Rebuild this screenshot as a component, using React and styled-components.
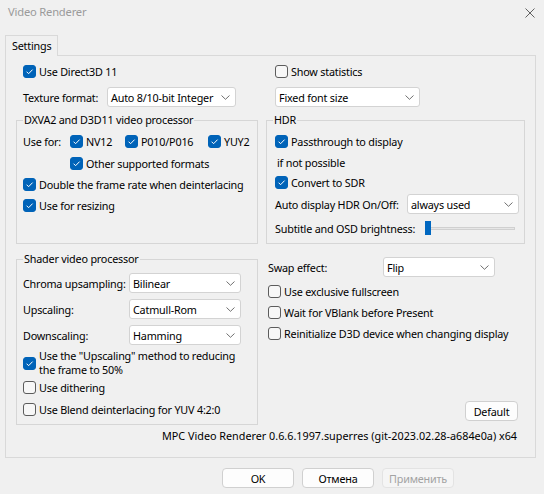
import styled, { createGlobalStyle } from "styled-components";

const GlobalStyle = createGlobalStyle`
  html, body {
    margin: 0;
    padding: 0;
    background: #f0f0f0;
  }
  body {
    font-family: "Noto Sans", "Segoe UI", sans-serif;
    font-size: 10.8px;
    letter-spacing: -0.2px;
    color: #000;
  }
  * { box-sizing: border-box; }
`;

const Window = styled.div`
  width: 544px;
  height: 494px;
  background: #f0f0f0;
  display: flex;
  flex-direction: column;
  overflow: hidden;
`;

const TitleBar = styled.div`
  height: 35px;
  display: flex;
  justify-content: space-between;
  padding: 4px 9px 0 8px;
`;

const Title = styled.div`
  line-height: 16px;
  font-size: 11.2px;
  color: #9a9a9a;
`;

const CloseIcon = styled.svg`
  margin-top: 4px;
`;

const TabStrip = styled.div`
  display: flex;
  padding-left: 5px;
  height: 20px;
  position: relative;
  z-index: 1;
`;

const Tab = styled.div`
  width: 53px;
  height: 21px;
  padding-left: 6px;
  line-height: 19px;
  border: 1px solid #d9d9d9;
  border-bottom: none;
  background: #f0f0f0;
`;

const Panel = styled.div`
  margin-left: 5px;
  width: 531px;
  height: 403px;
  border: 1px solid #d9d9d9;
  display: flex;
  flex-direction: column;
  padding: 0 10px;
`;

const Row = styled.div`
  display: grid;
  grid-template-columns: 242px 259px;
  column-gap: 8px;
  margin-top: ${(p) => p.$top}px;
  height: ${(p) => p.$h}px;
`;

const Cell = styled.div`
  display: flex;
  align-items: center;
  padding-left: ${(p) => p.$pad || 0}px;
`;

const Label = styled.span`
  display: inline-block;
  flex: none;
  width: ${(p) => (p.$w ? `${p.$w}px` : "auto")};
  white-space: nowrap;
`;

const Box = styled.span`
  flex: none;
  width: 13px;
  height: 13px;
  border-radius: 3px;
  display: flex;
  align-items: center;
  justify-content: center;
  background: ${(p) => (p.$checked ? "#0063b8" : "#f7f7f7")};
  border: 1px solid ${(p) => (p.$checked ? "#0063b8" : "#5c5c5c")};
`;

const CheckRow = styled.div`
  display: flex;
  align-items: center;
  gap: 3px;
  height: ${(p) => p.$h || 21}px;
  padding-left: ${(p) => p.$indent || 0}px;
  white-space: nowrap;
  line-height: ${(p) => p.$lh || 13}px;
`;

const Check = ({ checked }) => (
  <Box $checked={checked}>
    {checked && (
      <svg width="9" height="9" viewBox="0 0 9 9">
        <polyline
          points="1.6,4.7 3.6,6.7 7.6,2.6"
          fill="none"
          stroke="#fff"
          strokeWidth="1"
        />
      </svg>
    )}
  </Box>
);

const CheckItem = ({ checked, children, h, indent, lh }) => (
  <CheckRow $h={h} $indent={indent} $lh={lh}>
    <Check checked={checked} />
    <span>{children}</span>
  </CheckRow>
);

const SelectBox = styled.div`
  flex: none;
  width: ${(p) => p.$w}px;
  height: 20px;
  background: #fff;
  border: 1px solid #d3d3d3;
  border-radius: 3px;
  display: flex;
  align-items: center;
  justify-content: space-between;
  padding: 0 5px 0 3px;
  white-space: nowrap;
`;

const Select = ({ w, children }) => (
  <SelectBox $w={w}>
    <span>{children}</span>
    <svg width="9" height="5" viewBox="0 0 9 5">
      <polyline points="0.5,0.5 4.5,4.3 8.5,0.5" fill="none" stroke="#606060" strokeWidth="0.9" />
    </svg>
  </SelectBox>
);

const Group = styled.fieldset`
  margin: 0;
  height: ${(p) => p.$h}px;
  border: 1px solid #d6d6d6;
  padding: 0 6px 0 ${(p) => p.$pad}px;
  min-width: 0;
`;

const Legend = styled.legend`
  padding: 0 1px;
  margin-left: ${(p) => p.$shift || 0}px;
  line-height: 16px;
  height: 16px;
`;

const Stack = styled.div`
  display: flex;
  flex-direction: column;
  padding-top: ${(p) => p.$top || 0}px;
`;

const FieldRow = styled.div`
  display: flex;
  align-items: center;
  height: ${(p) => p.$h}px;
  margin-top: ${(p) => p.$top || 0}px;
  padding-left: ${(p) => p.$indent || 0}px;
`;

const UseForGrid = styled.div`
  display: grid;
  grid-template-columns: 47px 55px 83px auto;
  align-items: center;
  height: 21px;
`;

const SliderTrack = styled.div`
  position: relative;
  width: 90px;
  height: 3px;
  background: #e6e6e6;
  border: 1px solid #d0d0d0;
`;

const SliderThumb = styled.div`
  position: absolute;
  left: -1px;
  top: -7px;
  width: 6px;
  height: 14px;
  background: #0067c0;
`;

const RightColumn = styled.div`
  display: flex;
  flex-direction: column;
  padding: 6px 7px 4px 2px;
`;

const PushButton = styled.button`
  font: inherit;
  letter-spacing: inherit;
  color: ${(p) => (p.disabled ? "#a3a3a3" : "#000")};
  width: ${(p) => p.$w}px;
  height: 20px;
  padding: 0;
  background: ${(p) => (p.disabled ? "#f5f5f5" : "#fdfdfd")};
  border: 1px solid ${(p) => (p.disabled ? "#e3e3e3" : "#d0d0d0")};
  border-radius: 4px;
`;

const DefaultWrap = styled.div`
  margin-top: auto;
  display: flex;
  justify-content: flex-end;
`;

const Version = styled.div`
  height: 22px;
  line-height: 22px;
  text-align: right;
  padding-right: 8px;
  white-space: nowrap;
  letter-spacing: 0;
`;

const ButtonBar = styled.div`
  display: flex;
  gap: 8px;
  margin-top: 10px;
  padding-left: 222px;
`;

export default function App() {
  return (
    <Window>
      <GlobalStyle />
      <TitleBar>
        <Title>Video Renderer</Title>
        <CloseIcon width="10" height="10" viewBox="0 0 10 10">
          <path d="M0.5 0.5 L9.5 9.5 M9.5 0.5 L0.5 9.5" stroke="#505050" strokeWidth="0.9" />
        </CloseIcon>
      </TitleBar>
      <TabStrip>
        <Tab>Settings</Tab>
      </TabStrip>
      <Panel>
        <Row $top={5} $h={20}>
          <Cell $pad={7}>
            <CheckItem checked>Use Direct3D 11</CheckItem>
          </Cell>
          <Cell $pad={9}>
            <CheckItem>Show statistics</CheckItem>
          </Cell>
        </Row>
        <Row $top={5} $h={22}>
          <Cell $pad={7}>
            <Label $w={84}>Texture format:</Label>
            <Select w={129}>Auto 8/10-bit Integer</Select>
          </Cell>
          <Cell $pad={9}>
            <Select w={145}>Fixed font size</Select>
          </Cell>
        </Row>
        <Row $top={4} $h={132}>
          <Group $h={132} $pad={6}>
            <Legend>DXVA2 and D3D11 video processor</Legend>
            <Stack $top={3}>
              <UseForGrid>
                <Label>Use for:</Label>
                <CheckItem checked>NV12</CheckItem>
                <CheckItem checked>P010/P016</CheckItem>
                <CheckItem checked>YUY2</CheckItem>
              </UseForGrid>
              <CheckItem checked h={22} indent={47}>Other supported formats</CheckItem>
              <CheckItem checked>Double the frame rate when deinterlacing</CheckItem>
              <CheckItem checked>Use for resizing</CheckItem>
            </Stack>
          </Group>
          <Group $h={132} $pad={8}>
            <Legend $shift={-2}>HDR</Legend>
            <Stack $top={3}>
              <CheckItem checked>Passthrough to display</CheckItem>
              <FieldRow $h={20} $indent={2}>if not possible</FieldRow>
              <CheckItem checked>Convert to SDR</CheckItem>
              <FieldRow $h={22}>
                <Label $w={132}>Auto display HDR On/Off:</Label>
                <Select w={112}>always used</Select>
              </FieldRow>
              <FieldRow $h={26}>
                <Label $w={150}>Subtitle and OSD brightness:</Label>
                <SliderTrack>
                  <SliderThumb />
                </SliderTrack>
              </FieldRow>
            </Stack>
          </Group>
        </Row>
        <Row $top={7} $h={174}>
          <Group $h={174} $pad={6}>
            <Legend>Shader video processor</Legend>
            <Stack $top={5}>
              <FieldRow $h={22}>
                <Label $w={106}>Chroma upsampling:</Label>
                <Select w={112}>Bilinear</Select>
              </FieldRow>
              <FieldRow $h={22} $top={4}>
                <Label $w={106}>Upscaling:</Label>
                <Select w={112}>Catmull-Rom</Select>
              </FieldRow>
              <FieldRow $h={22} $top={4}>
                <Label $w={106}>Downscaling:</Label>
                <Select w={112}>Hamming</Select>
              </FieldRow>
              <FieldRow $h={26} $top={4}>
                <CheckItem checked h={26} lh={14}>
                  Use the "Upscaling" method to reducing
                  <br />
                  the frame to 50%
                </CheckItem>
              </FieldRow>
              <CheckItem h={22}>Use dithering</CheckItem>
              <CheckItem h={22}>Use Blend deinterlacing for YUV 4:2:0</CheckItem>
            </Stack>
          </Group>
          <RightColumn>
            <FieldRow $h={20}>
              <Label $w={115}>Swap effect:</Label>
              <Select w={112}>Flip</Select>
            </FieldRow>
            <Stack $top={4}>
              <CheckItem>Use exclusive fullscreen</CheckItem>
              <CheckItem>Wait for VBlank before Present</CheckItem>
              <CheckItem>Reinitialize D3D device when changing display</CheckItem>
            </Stack>
            <DefaultWrap>
              <PushButton $w={53}>Default</PushButton>
            </DefaultWrap>
          </RightColumn>
        </Row>
        <Version>MPC Video Renderer 0.6.6.1997.superres (git-2023.02.28-a684e0a) x64</Version>
      </Panel>
      <ButtonBar>
        <PushButton $w={72}>OK</PushButton>
        <PushButton $w={72}>Отмена</PushButton>
        <PushButton $w={72} disabled>
          Применить
        </PushButton>
      </ButtonBar>
    </Window>
  );
}
